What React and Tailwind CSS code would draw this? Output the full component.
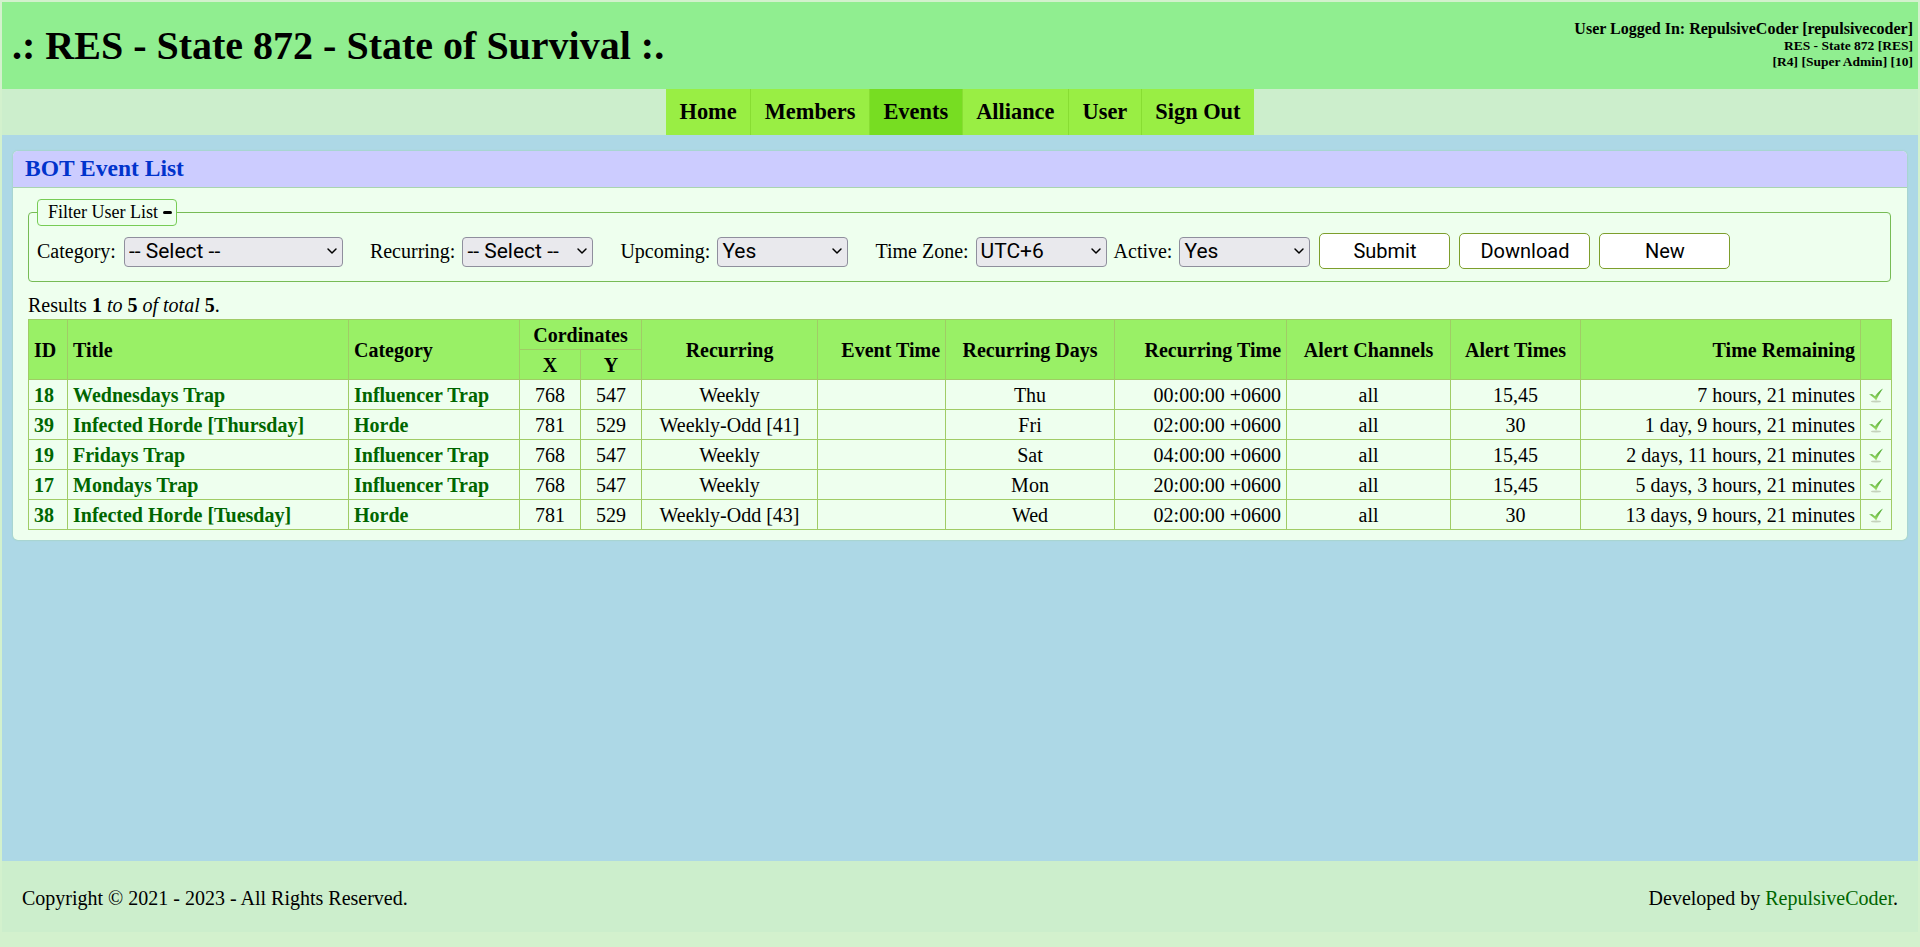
import React from "react";
import { ChevronDown } from "lucide-react";

const navItems = ["Home", "Members", "Events", "Alliance", "User", "Sign Out"];

const events = [
  { id: 18, title: "Wednesdays Trap", category: "Influencer Trap", x: 768, y: 547, recurring: "Weekly", day: "Thu", time: "00:00:00 +0600", alerts: "15,45", remaining: "7 hours, 21 minutes" },
  { id: 39, title: "Infected Horde [Thursday]", category: "Horde", x: 781, y: 529, recurring: "Weekly-Odd [41]", day: "Fri", time: "02:00:00 +0600", alerts: "30", remaining: "1 day, 9 hours, 21 minutes" },
  { id: 19, title: "Fridays Trap", category: "Influencer Trap", x: 768, y: 547, recurring: "Weekly", day: "Sat", time: "04:00:00 +0600", alerts: "15,45", remaining: "2 days, 11 hours, 21 minutes" },
  { id: 17, title: "Mondays Trap", category: "Influencer Trap", x: 768, y: 547, recurring: "Weekly", day: "Mon", time: "20:00:00 +0600", alerts: "15,45", remaining: "5 days, 3 hours, 21 minutes" },
  { id: 38, title: "Infected Horde [Tuesday]", category: "Horde", x: 781, y: 529, recurring: "Weekly-Odd [43]", day: "Wed", time: "02:00:00 +0600", alerts: "30", remaining: "13 days, 9 hours, 21 minutes" },
];

const th = "border border-[#a0cc66] bg-[#99f066] px-[5px] font-bold leading-none";
const td = "border border-[#a0cc66] px-[5px] h-[30px] leading-none";

function Select({ value, className }) {
  return (
    <span className={`relative inline-block h-[30px] ${className}`}>
      <select
        defaultValue={value}
        className="h-full w-full appearance-none rounded-[4px] border border-[#8f8f9d] bg-[#e9e9ed] pl-[4px] font-['Roboto',sans-serif] text-[21px] leading-none text-black"
      >
        <option>{value}</option>
      </select>
      {/* arrow sits over the select */}
      <ChevronDown className="pointer-events-none absolute right-[3px] top-[7px] h-[16px] w-[16px] text-black" strokeWidth={2.2} />
    </span>
  );
}

function CheckIcon() {
  return (
    <svg width="16" height="16" viewBox="0 0 16 16" className="mx-auto block">
      <defs>
        <linearGradient id="tick" x1="0" y1="0" x2="0" y2="1">
          <stop offset="0" stopColor="#3f9f25" />
          <stop offset="1" stopColor="#a5e070" />
        </linearGradient>
      </defs>
      <ellipse cx="8" cy="14.5" rx="5" ry="0.9" fill="#c4d2bb" />
      <path d="M1 7.5 L4 7 L7 9.3 C9 6.3 12 3.3 15 1.5 C12.5 5 10.2 9 8.2 13.5 C6 10.8 3.5 8.7 1 7.5 Z" fill="url(#tick)" />
    </svg>
  );
}

function Button({ children }) {
  return (
    <button className="h-[36px] w-[131px] rounded-[5px] border border-[#7d9e2c] bg-white font-['Roboto',sans-serif] text-[20px] leading-none text-black">
      {children}
    </button>
  );
}

export default function App() {
  return (
    <div className="flex h-[947px] flex-col bg-[#d3f1cd] px-[2px] pb-[15px] pt-[2px] font-['Liberation_Serif',serif] text-[20px] text-black">
      {/* Header */}
      <div className="flex h-[87px] shrink-0 items-start justify-between bg-[#90ee90] pl-[10px] pr-[5px]">
        <h1 className="mt-[20px] text-[40px] font-bold leading-[48px]">.: RES - State 872 - State of Survival :.</h1>
        <div className="mt-[18px] text-right font-bold leading-none">
          <div className="text-[16px] leading-[18px]">User Logged In: RepulsiveCoder [repulsivecoder]</div>
          <div className="text-[13.5px] leading-[16px]">RES - State 872 [RES]</div>
          <div className="text-[13.5px] leading-[16px]">[R4] [Super Admin] [10]</div>
        </div>
      </div>

      {/* Nav */}
      <nav className="flex h-[46px] shrink-0 justify-center bg-[#cceecc]">
        {navItems.map((item) => (
          <a
            key={item}
            className={`flex items-center border-l border-[#88dd33] px-[13.5px] text-[22.4px] font-bold first:border-l-0 ${
              item === "Events" ? "bg-[#77dd22]" : "bg-[#99ee44]"
            }`}
          >
            {item}
          </a>
        ))}
      </nav>

      {/* Content */}
      <main className="flex-1 bg-[#add8e6] pl-[11px] pt-[16px]">
        <div className="w-[1894px] rounded-[5px] bg-[#eeffee] pb-[10px] shadow-[0_0_2px_#9ccf9c]">
          <h2 className="flex h-[37px] items-center rounded-t-[5px] border-b border-[#a9d4b0] bg-[#ccccff] pl-[12px] text-[23.5px] font-bold text-[#0033cc]">
            BOT Event List
          </h2>

          <div className="pl-[15px] pr-[16px]">
            <fieldset className="mt-[11px] h-[83px] rounded-[4px] border border-[#77bb55] px-[8px]">
              <legend className="flex h-[27px] items-center rounded-[4px] border border-[#77cc55] bg-[#eeffee] pl-[10px] pr-[4px] text-[18px]">
                Filter User List
                <span className="ml-[5px] inline-block h-[3px] w-[9px] rounded-sm bg-black" />
              </legend>
              <div className="mt-[7px] flex items-center">
                <label className="mr-[8px]">Category:</label>
                <Select value="-- Select --" className="w-[219px]" />
                <label className="ml-[27px] mr-[7px]">Recurring:</label>
                <Select value="-- Select --" className="w-[131px]" />
                <label className="ml-[27px] mr-[7px]">Upcoming:</label>
                <Select value="Yes" className="w-[131px]" />
                <label className="ml-[27px] mr-[7px]">Time Zone:</label>
                <Select value="UTC+6" className="w-[131px]" />
                <label className="ml-[7px] mr-[7px]">Active:</label>
                <Select value="Yes" className="w-[131px]" />
                <div className="ml-[9px] flex gap-[9px]">
                  <Button>Submit</Button>
                  <Button>Download</Button>
                  <Button>New</Button>
                </div>
              </div>
            </fieldset>

            <p className="mt-[10px] h-[27px] leading-[26px]">
              Results <b>1</b> <i>to</i> <b>5</b> <i>of total</i> <b>5</b>.
            </p>

            <table className="w-[1863px] table-fixed border-collapse">
              <colgroup>
                <col className="w-[39px]" />
                <col className="w-[281px]" />
                <col className="w-[171px]" />
                <col className="w-[61px]" />
                <col className="w-[61px]" />
                <col className="w-[176px]" />
                <col className="w-[128px]" />
                <col className="w-[169px]" />
                <col className="w-[172px]" />
                <col className="w-[164px]" />
                <col className="w-[130px]" />
                <col className="w-[280px]" />
                <col className="w-[31px]" />
              </colgroup>
              <thead>
                <tr className="h-[30px]">
                  <th rowSpan={2} className={`${th} text-left`}>ID</th>
                  <th rowSpan={2} className={`${th} text-left`}>Title</th>
                  <th rowSpan={2} className={`${th} text-left`}>Category</th>
                  <th colSpan={2} className={`${th} text-center`}>Cordinates</th>
                  <th rowSpan={2} className={`${th} text-center`}>Recurring</th>
                  <th rowSpan={2} className={`${th} text-right`}>Event Time</th>
                  <th rowSpan={2} className={`${th} text-center`}>Recurring Days</th>
                  <th rowSpan={2} className={`${th} text-right`}>Recurring Time</th>
                  <th rowSpan={2} className={`${th} text-center`}>Alert Channels</th>
                  <th rowSpan={2} className={`${th} text-center`}>Alert Times</th>
                  <th rowSpan={2} className={`${th} text-right`}>Time Remaining</th>
                  <th rowSpan={2} className={th}></th>
                </tr>
                <tr className="h-[30px]">
                  <th className={`${th} text-center`}>X</th>
                  <th className={`${th} text-center`}>Y</th>
                </tr>
              </thead>
              <tbody>
                {events.map((e) => (
                  <tr key={e.id}>
                    <td className={`${td} font-bold text-[#006600]`}>{e.id}</td>
                    <td className={`${td} font-bold text-[#006600]`}>{e.title}</td>
                    <td className={`${td} font-bold text-[#006600]`}>{e.category}</td>
                    <td className={`${td} text-center`}>{e.x}</td>
                    <td className={`${td} text-center`}>{e.y}</td>
                    <td className={`${td} text-center`}>{e.recurring}</td>
                    <td className={td}></td>
                    <td className={`${td} text-center`}>{e.day}</td>
                    <td className={`${td} text-right`}>{e.time}</td>
                    <td className={`${td} text-center`}>all</td>
                    <td className={`${td} text-center`}>{e.alerts}</td>
                    <td className={`${td} text-right`}>{e.remaining}</td>
                    <td className={`${td} !px-0`}><CheckIcon /></td>
                  </tr>
                ))}
              </tbody>
            </table>
          </div>
        </div>
      </main>

      {/* Footer */}
      <footer className="flex h-[71px] shrink-0 items-start justify-between bg-[#cceecc] px-[20px] pt-[22px]">
        <span>Copyright © 2021 - 2023 - All Rights Reserved.</span>
        <span>
          Developed by <a className="text-[#006600]">RepulsiveCoder</a>.
        </span>
      </footer>
    </div>
  );
}
